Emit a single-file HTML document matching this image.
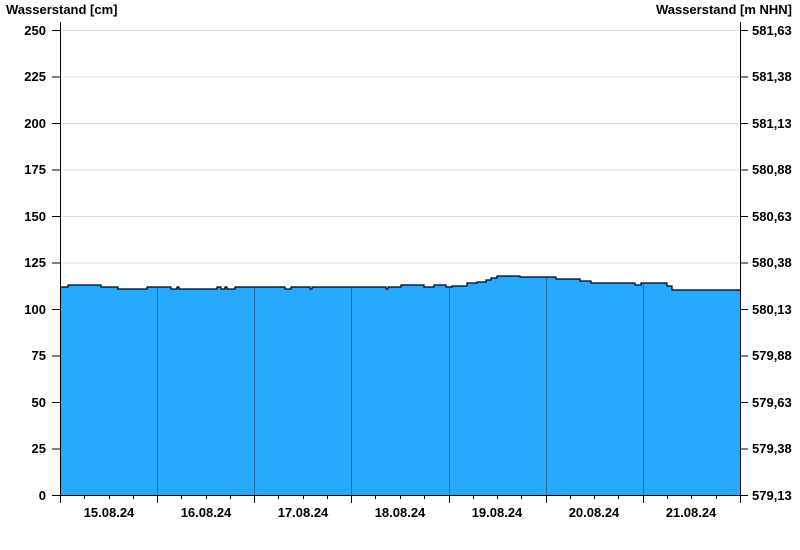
<!DOCTYPE html>
<html><head><meta charset="utf-8"><style>
html,body{margin:0;padding:0;background:#fff;width:800px;height:550px;overflow:hidden}
text{font-family:"Liberation Sans",Arial,sans-serif;font-weight:bold;font-size:13px;fill:#000}
</style></head><body>
<svg width="800" height="550" viewBox="0 0 800 550" xmlns="http://www.w3.org/2000/svg">
<text x="6" y="14">Wasserstand [cm]</text>
<text x="792" y="14" text-anchor="end">Wasserstand [m NHN]</text>
<g stroke="#dcdcdc" stroke-width="1">
<line x1="60" x2="740" y1="30.5" y2="30.5"/><line x1="60" x2="740" y1="77" y2="77"/><line x1="60" x2="740" y1="123.5" y2="123.5"/><line x1="60" x2="740" y1="170" y2="170"/><line x1="60" x2="740" y1="216.5" y2="216.5"/><line x1="60" x2="740" y1="263" y2="263"/>
</g>
<polygon fill="#29a8ff" points="60,495 60,287 68,287 68,285 101,285 101,287 118,287 118,289 147,289 147,287 171,287 171,289 177,289 177,287 179,287 179,289 217,289 217,287 221,287 221,289 225,289 225,287 227,287 227,289 235,289 235,287 285,287 285,289 291,289 291,287 310,287 310,289 312,289 312,287 386,287 386,289 388,289 388,287 401,287 401,285 424,285 424,287 434,287 434,285 446,285 446,287 452,287 452,286 467,286 467,283 477,283 477,282 486,282 486,280 491,280 491,278 497,278 497,276 520,276 520,277 556,277 556,279 580,279 580,281 591,281 591,283 635,283 635,285 641,285 641,283 667,283 667,286 672,286 672,290 740,290 740,495"/>
<polyline fill="none" stroke="#000" stroke-width="1.2" points="60,287 68,287 68,285 101,285 101,287 118,287 118,289 147,289 147,287 171,287 171,289 177,289 177,287 179,287 179,289 217,289 217,287 221,287 221,289 225,289 225,287 227,287 227,289 235,289 235,287 285,287 285,289 291,289 291,287 310,287 310,289 312,289 312,287 386,287 386,289 388,289 388,287 401,287 401,285 424,285 424,287 434,287 434,285 446,285 446,287 452,287 452,286 467,286 467,283 477,283 477,282 486,282 486,280 491,280 491,278 497,278 497,276 520,276 520,277 556,277 556,279 580,279 580,281 591,281 591,283 635,283 635,285 641,285 641,283 667,283 667,286 672,286 672,290 740,290"/>
<g stroke="#1f6a98" stroke-width="1">
<line x1="157.5" x2="157.5" y1="288" y2="495"/><line x1="254.5" x2="254.5" y1="288" y2="495"/><line x1="351.5" x2="351.5" y1="288" y2="495"/><line x1="449.5" x2="449.5" y1="288" y2="495"/><line x1="546.5" x2="546.5" y1="278" y2="495"/><line x1="643.5" x2="643.5" y1="285" y2="495"/>
</g>
<g stroke="#000" stroke-width="1">
<line x1="60.5" x2="60.5" y1="22" y2="503"/>
<line x1="740.5" x2="740.5" y1="22" y2="495"/>
<line x1="52" x2="740" y1="495.5" y2="495.5"/>
<line x1="52" x2="60" y1="30.5" y2="30.5"/><line x1="52" x2="60" y1="77" y2="77"/><line x1="52" x2="60" y1="123.5" y2="123.5"/><line x1="52" x2="60" y1="170" y2="170"/><line x1="52" x2="60" y1="216.5" y2="216.5"/><line x1="52" x2="60" y1="263" y2="263"/><line x1="52" x2="60" y1="309.5" y2="309.5"/><line x1="52" x2="60" y1="356" y2="356"/><line x1="52" x2="60" y1="402.5" y2="402.5"/><line x1="52" x2="60" y1="449" y2="449"/>
<line x1="740" x2="748" y1="30.5" y2="30.5"/><line x1="740" x2="748" y1="77" y2="77"/><line x1="740" x2="748" y1="123.5" y2="123.5"/><line x1="740" x2="748" y1="170" y2="170"/><line x1="740" x2="748" y1="216.5" y2="216.5"/><line x1="740" x2="748" y1="263" y2="263"/><line x1="740" x2="748" y1="309.5" y2="309.5"/><line x1="740" x2="748" y1="356" y2="356"/><line x1="740" x2="748" y1="402.5" y2="402.5"/><line x1="740" x2="748" y1="449" y2="449"/><line x1="740" x2="748" y1="495.5" y2="495.5"/>
<line x1="157.5" x2="157.5" y1="495" y2="503"/><line x1="254.5" x2="254.5" y1="495" y2="503"/><line x1="351.5" x2="351.5" y1="495" y2="503"/><line x1="449.5" x2="449.5" y1="495" y2="503"/><line x1="546.5" x2="546.5" y1="495" y2="503"/><line x1="643.5" x2="643.5" y1="495" y2="503"/><line x1="740.5" x2="740.5" y1="495" y2="503"/>
<path d="M84.5 495v4M109.5 495v4M133.5 495v4M181.5 495v4M206.5 495v4M230.5 495v4M278.5 495v4M303.5 495v4M327.5 495v4M375.5 495v4M400.5 495v4M424.5 495v4M473.5 495v4M497.5 495v4M521.5 495v4M570.5 495v4M594.5 495v4M618.5 495v4M667.5 495v4M691.5 495v4M716.5 495v4"/>
</g>
<g text-anchor="end">
<text x="46" y="35">250</text><text x="46" y="81">225</text><text x="46" y="128">200</text><text x="46" y="174">175</text><text x="46" y="221">150</text><text x="46" y="267">125</text><text x="46" y="314">100</text><text x="46" y="360">75</text><text x="46" y="407">50</text><text x="46" y="453">25</text><text x="46" y="500">0</text>
</g>
<g>
<text x="752" y="35">581,63</text><text x="752" y="81">581,38</text><text x="752" y="128">581,13</text><text x="752" y="174">580,88</text><text x="752" y="221">580,63</text><text x="752" y="267">580,38</text><text x="752" y="314">580,13</text><text x="752" y="360">579,88</text><text x="752" y="407">579,63</text><text x="752" y="453">579,38</text><text x="752" y="500">579,13</text>
</g>
<g text-anchor="middle">
<text x="109" y="517">15.08.24</text><text x="206" y="517">16.08.24</text><text x="303" y="517">17.08.24</text><text x="400" y="517">18.08.24</text><text x="497" y="517">19.08.24</text><text x="594" y="517">20.08.24</text><text x="691" y="517">21.08.24</text>
</g>
</svg>
</body></html>
